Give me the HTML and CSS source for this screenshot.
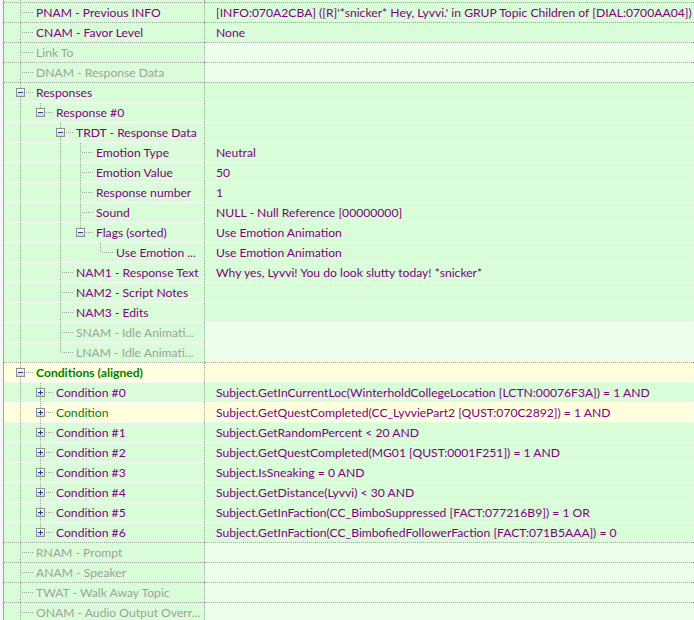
FILE: index.html
```html
<!DOCTYPE html>
<html>
<head>
<meta charset="utf-8">
<link rel="stylesheet" href="styles.css">
</head>
<body>
<div class="tree">
  <div class="row strip"><div class="name"><span class="g gv"></span></div><div class="val"></div></div>

  <div class="row top"><div class="name"><span class="n nt"></span><span class="lbl">PNAM - Previous INFO</span></div><div class="val">[INFO:070A2CBA] ([R]'*snicker* Hey, Lyvvi.' in GRUP Topic Children of [DIAL:0700AA04])</div></div>
  <div class="row top"><div class="name"><span class="n nt"></span><span class="lbl">CNAM - Favor Level</span></div><div class="val">None</div></div>
  <div class="row top dim"><div class="name"><span class="n nt"></span><span class="lbl">Link To</span></div><div class="val"></div></div>
  <div class="row top dim"><div class="name"><span class="n nt"></span><span class="lbl">DNAM - Response Data</span></div><div class="val"></div></div>
  <div class="row top"><div class="name"><span class="n nt"><span class="box"><svg width="7" height="7" viewBox="0 0 7 7"><path d="M1 3.5h5" stroke="#24418a"/></svg></span></span><span class="lbl">Responses</span></div><div class="val"></div></div>
  <div class="row sub"><div class="name"><span class="g gv"></span><span class="n nl"><span class="box"><svg width="7" height="7" viewBox="0 0 7 7"><path d="M1 3.5h5" stroke="#24418a"/></svg></span></span><span class="lbl">Response #0</span></div><div class="val"></div></div>
  <div class="row sub"><div class="name"><span class="g gv"></span><span class="g"></span><span class="n nt"><span class="box"><svg width="7" height="7" viewBox="0 0 7 7"><path d="M1 3.5h5" stroke="#24418a"/></svg></span></span><span class="lbl">TRDT - Response Data</span></div><div class="val"></div></div>
  <div class="row sub"><div class="name"><span class="g gv"></span><span class="g"></span><span class="g gv"></span><span class="n nt"></span><span class="lbl">Emotion Type</span></div><div class="val">Neutral</div></div>
  <div class="row sub"><div class="name"><span class="g gv"></span><span class="g"></span><span class="g gv"></span><span class="n nt"></span><span class="lbl">Emotion Value</span></div><div class="val">50</div></div>
  <div class="row sub"><div class="name"><span class="g gv"></span><span class="g"></span><span class="g gv"></span><span class="n nt"></span><span class="lbl">Response number</span></div><div class="val">1</div></div>
  <div class="row sub"><div class="name"><span class="g gv"></span><span class="g"></span><span class="g gv"></span><span class="n nt"></span><span class="lbl">Sound</span></div><div class="val">NULL - Null Reference [00000000]</div></div>
  <div class="row sub"><div class="name"><span class="g gv"></span><span class="g"></span><span class="g gv"></span><span class="n nl"><span class="box"><svg width="7" height="7" viewBox="0 0 7 7"><path d="M1 3.5h5" stroke="#24418a"/></svg></span></span><span class="lbl">Flags (sorted)</span></div><div class="val">Use Emotion Animation</div></div>
  <div class="row sub"><div class="name"><span class="g gv"></span><span class="g"></span><span class="g gv"></span><span class="g"></span><span class="n nl"></span><span class="lbl">Use Emotion ...</span></div><div class="val">Use Emotion Animation</div></div>
  <div class="row sub"><div class="name"><span class="g gv"></span><span class="g"></span><span class="n nt"></span><span class="lbl">NAM1 - Response Text</span></div><div class="val">Why yes, Lyvvi! You do look slutty today! *snicker*</div></div>
  <div class="row sub"><div class="name"><span class="g gv"></span><span class="g"></span><span class="n nt"></span><span class="lbl">NAM2 - Script Notes</span></div><div class="val"></div></div>
  <div class="row sub"><div class="name"><span class="g gv"></span><span class="g"></span><span class="n nt"></span><span class="lbl">NAM3 - Edits</span></div><div class="val"></div></div>
  <div class="row sub dim"><div class="name"><span class="g gv"></span><span class="g"></span><span class="n nt"></span><span class="lbl">SNAM - Idle Animati...</span></div><div class="val"></div></div>
  <div class="row sub dim"><div class="name"><span class="g gv"></span><span class="g"></span><span class="n nl"></span><span class="lbl">LNAM - Idle Animati...</span></div><div class="val"></div></div>

  <div class="row top cond"><div class="name"><span class="n nt"><span class="box"><svg width="7" height="7" viewBox="0 0 7 7"><path d="M1 3.5h5" stroke="#24418a"/></svg></span></span><span class="lbl hl bold">Conditions (aligned)</span></div><div class="val"></div></div>
  <div class="row sub"><div class="name"><span class="g gv"></span><span class="n nt"><span class="box"><svg width="7" height="7" viewBox="0 0 7 7"><path d="M1 3.5h5M3.5 1v5" stroke="#24418a"/></svg></span></span><span class="lbl">Condition #0</span></div><div class="val">Subject.GetInCurrentLoc(WinterholdCollegeLocation [LCTN:00076F3A]) = 1 AND</div></div>
  <div class="row sub cond"><div class="name"><span class="g gv"></span><span class="n nt"><span class="box"><svg width="7" height="7" viewBox="0 0 7 7"><path d="M1 3.5h5M3.5 1v5" stroke="#24418a"/></svg></span></span><span class="lbl hl">Condition</span></div><div class="val">Subject.GetQuestCompleted(CC_LyvviePart2 [QUST:070C2892]) = 1 AND</div></div>
  <div class="row sub"><div class="name"><span class="g gv"></span><span class="n nt"><span class="box"><svg width="7" height="7" viewBox="0 0 7 7"><path d="M1 3.5h5M3.5 1v5" stroke="#24418a"/></svg></span></span><span class="lbl">Condition #1</span></div><div class="val">Subject.GetRandomPercent &lt; 20 AND</div></div>
  <div class="row sub"><div class="name"><span class="g gv"></span><span class="n nt"><span class="box"><svg width="7" height="7" viewBox="0 0 7 7"><path d="M1 3.5h5M3.5 1v5" stroke="#24418a"/></svg></span></span><span class="lbl">Condition #2</span></div><div class="val">Subject.GetQuestCompleted(MG01 [QUST:0001F251]) = 1 AND</div></div>
  <div class="row sub"><div class="name"><span class="g gv"></span><span class="n nt"><span class="box"><svg width="7" height="7" viewBox="0 0 7 7"><path d="M1 3.5h5M3.5 1v5" stroke="#24418a"/></svg></span></span><span class="lbl">Condition #3</span></div><div class="val">Subject.IsSneaking = 0 AND</div></div>
  <div class="row sub"><div class="name"><span class="g gv"></span><span class="n nt"><span class="box"><svg width="7" height="7" viewBox="0 0 7 7"><path d="M1 3.5h5M3.5 1v5" stroke="#24418a"/></svg></span></span><span class="lbl">Condition #4</span></div><div class="val">Subject.GetDistance(Lyvvi) &lt; 30 AND</div></div>
  <div class="row sub"><div class="name"><span class="g gv"></span><span class="n nt"><span class="box"><svg width="7" height="7" viewBox="0 0 7 7"><path d="M1 3.5h5M3.5 1v5" stroke="#24418a"/></svg></span></span><span class="lbl">Condition #5</span></div><div class="val">Subject.GetInFaction(CC_BimboSuppressed [FACT:077216B9]) = 1 OR</div></div>
  <div class="row sub"><div class="name"><span class="g gv"></span><span class="n nl"><span class="box"><svg width="7" height="7" viewBox="0 0 7 7"><path d="M1 3.5h5M3.5 1v5" stroke="#24418a"/></svg></span></span><span class="lbl">Condition #6</span></div><div class="val">Subject.GetInFaction(CC_BimbofiedFollowerFaction [FACT:071B5AAA]) = 0</div></div>

  <div class="row top dim"><div class="name"><span class="n nt"></span><span class="lbl">RNAM - Prompt</span></div><div class="val"></div></div>
  <div class="row top dim"><div class="name"><span class="n nt"></span><span class="lbl">ANAM - Speaker</span></div><div class="val"></div></div>
  <div class="row top dim"><div class="name"><span class="n nt"></span><span class="lbl">TWAT - Walk Away Topic</span></div><div class="val"></div></div>
  <div class="row top dim"><div class="name"><span class="n nt"></span><span class="lbl">ONAM - Audio Output Overr...</span></div><div class="val"></div></div>
</div>
</body>
</html>
```
FILE: styles.css
```css
* { box-sizing: border-box; }

html, body {
  margin: 0;
  padding: 0;
  background: #f7f7f7;
  overflow: hidden;
}

body {
  font-family: Lato, "Liberation Sans", sans-serif;
  font-size: 12.15px;
  color: #800080;
}

.tree {
  margin-left: 3px;
  border-left: 1px solid #a0a0a0;
  height: 620px;
  overflow: hidden;
  background: #d9fdd9;
}

.row {
  display: grid;
  grid-template-columns: 201px 1fr;
  height: 20px;
}

.row > div {
  height: 20px;
  border-top: 1px dotted #a0a0a0;
  background-color: #d9fdd9;
  line-height: 19px;
  white-space: nowrap;
  overflow: hidden;
}

.row.sub > div {
  border-top-color: #ffffff;
}

.row.strip {
  height: 2px;
}

.row.strip > div {
  height: 2px;
  border-top: 0;
}

.row.strip .g {
  height: 2px;
}

.name {
  display: flex;
  padding-left: 6px;
  border-right: 1px dotted #a0a0a0;
}

.val {
  padding-left: 11px;
}

.dim .name {
  color: #a0a0a0;
}

.dim .val {
  background-color: #edfeed;
}

.row.cond > div {
  background-color: #ffffe0;
}

.hl {
  color: #008000;
}

.bold {
  font-weight: bold;
}

.g {
  flex: none;
  width: 20px;
  height: 19px;
}

.gv {
  background: repeating-linear-gradient(to bottom, #a0a0a0 0 1px, transparent 1px 2px) 10px 0 / 1px 100% no-repeat;
}

.n {
  flex: none;
  width: 24px;
  height: 19px;
}

.nt {
  background:
    repeating-linear-gradient(to right, #a0a0a0 0 1px, transparent 1px 2px) 12px 9px / 11px 1px no-repeat,
    repeating-linear-gradient(to bottom, #a0a0a0 0 1px, transparent 1px 2px) 10px 0 / 1px 100% no-repeat;
}

.nl {
  background:
    repeating-linear-gradient(to right, #a0a0a0 0 1px, transparent 1px 2px) 12px 9px / 11px 1px no-repeat,
    repeating-linear-gradient(to bottom, #a0a0a0 0 1px, transparent 1px 2px) 10px 0 / 1px 10px no-repeat;
}

.box {
  display: block;
  width: 9px;
  height: 9px;
  margin: 5px 0 0 6px;
  border: 1px solid #8e8f8f;
  background: linear-gradient(#ffffff, #d6d6d6);
}

.box svg {
  display: block;
}

.lbl {
  padding-left: 2px;
}
```
